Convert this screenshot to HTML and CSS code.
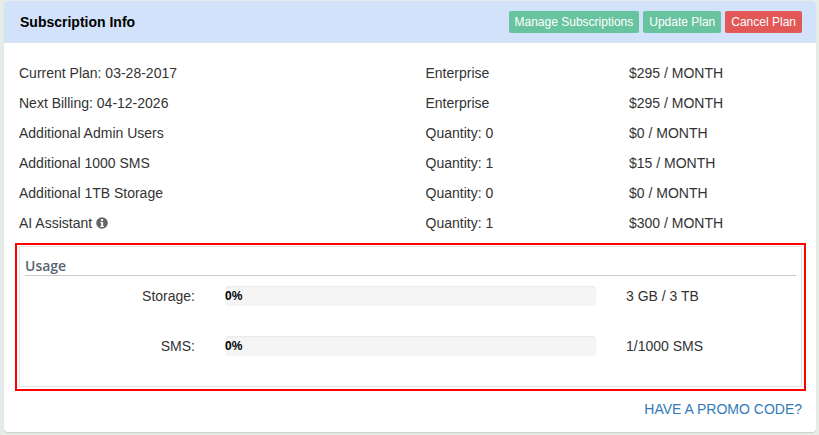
FILE: index.html
```html
<!DOCTYPE html>
<html lang="en">
<head>
<meta charset="utf-8">
<title>Subscription Info</title>
<link rel="stylesheet" href="styles.css">
</head>
<body>
<section class="panel">
  <header class="panel-head">
    <h2 class="panel-title">Subscription Info</h2>
    <div class="actions">
      <a class="btn btn-green">Manage Subscriptions</a>
      <a class="btn btn-green">Update Plan</a>
      <a class="btn btn-red">Cancel Plan</a>
    </div>
  </header>
  <div class="panel-body">
    <div class="plan-rows">
      <div class="plan-row"><span>Current Plan: 03-28-2017</span><span>Enterprise</span><span>$295 / MONTH</span></div>
      <div class="plan-row"><span>Next Billing: 04-12-2026</span><span>Enterprise</span><span>$295 / MONTH</span></div>
      <div class="plan-row"><span>Additional Admin Users</span><span>Quantity: 0</span><span>$0 / MONTH</span></div>
      <div class="plan-row"><span>Additional 1000 SMS</span><span>Quantity: 1</span><span>$15 / MONTH</span></div>
      <div class="plan-row"><span>Additional 1TB Storage</span><span>Quantity: 0</span><span>$0 / MONTH</span></div>
      <div class="plan-row"><span class="with-icon">AI Assistant
        <svg class="info-icon" viewBox="0 0 12 12" aria-hidden="true"><circle cx="6" cy="6" r="5.8" fill="#666"/><rect x="5" y="2.1" width="2.1" height="1.9" fill="#fff"/><path d="M4.4 5h2.7v3.9h.8v1H4.3v-1h.9V6h-.8z" fill="#fff"/></svg>
      </span><span>Quantity: 1</span><span>$300 / MONTH</span></div>
    </div>
    <div class="usage-highlight">
      <div class="usage-box">
        <h3 class="usage-title">Usage</h3>
        <div class="usage-row">
          <span class="usage-label">Storage:</span>
          <div class="progress"><span class="progress-text">0%</span></div>
          <span class="usage-value">3 GB / 3 TB</span>
        </div>
        <div class="usage-row">
          <span class="usage-label">SMS:</span>
          <div class="progress"><span class="progress-text">0%</span></div>
          <span class="usage-value">1/1000 SMS</span>
        </div>
      </div>
    </div>
    <div class="promo"><a class="promo-link">HAVE A PROMO CODE?</a></div>
  </div>
</section>
</body>
</html>
```
FILE: styles.css
```css
* { box-sizing: border-box; }
html, body { height: 100%; }
body {
  margin: 0;
  padding: 1px 3px 0 4px;
  background: #e6ece8;
  font-family: "Liberation Sans", Arial, sans-serif;
  font-size: 14px;
  line-height: 20px;
  color: #333;
  overflow: hidden;
}
.panel {
  width: 812px;
  height: 431px;
  background: #fff;
  border-radius: 4px;
  box-shadow: 0 1px 1px rgba(0, 0, 0, .12);
  overflow: hidden;
}
.panel-head {
  height: 42px;
  display: flex;
  align-items: center;
  justify-content: space-between;
  padding: 0 14px 0 16px;
  background: #d2e2fa;
  border-bottom: 1px solid #dfe3e8;
}
.panel-title { margin: 0; font-size: 14px; font-weight: 700; color: #000; }
.actions { display: flex; gap: 4px; }
.btn {
  height: 22px;
  padding: 0 6px;
  border-radius: 2px;
  font-size: 12px;
  line-height: 22px;
  color: #fff;
}
.btn-green { background: #68c39f; }
.btn-red { background: #e25856; }
.panel-body { padding: 15px 10px 0 11px; }
.plan-row {
  height: 30px;
  display: grid;
  grid-template-columns: 406.5px 203.5px 1fr;
  align-items: center;
  padding-left: 4px;
}
.with-icon { display: flex; align-items: center; gap: 4px; }
.info-icon { width: 12px; height: 12px; }
.usage-highlight {
  height: 148px;
  margin-top: 5px;
  padding: 1px 2px 2px;
  border: 2px solid #f00;
}
.usage-box { height: 141px; padding: 10px 5px 0; border: 1px solid #e3e3e3; }
.usage-title {
  margin: 0 0 10px;
  height: 19px;
  font-family: "Open Sans", "Liberation Sans", sans-serif;
  font-size: 14px;
  font-weight: 600;
  line-height: 17px;
  color: #5a6472;
  border-bottom: 1px solid #ccc;
}
.usage-row {
  display: grid;
  grid-template-columns: 170px 371px 1fr;
  column-gap: 30px;
  align-items: center;
  height: 20px;
  margin-bottom: 30px;
}
.usage-label { text-align: right; }
.progress {
  height: 20px;
  background: #f5f5f5;
  border-radius: 4px;
  box-shadow: inset 0 1px 2px rgba(0, 0, 0, .06);
}
.progress-text { display: block; font-size: 12px; font-weight: 700; color: #000; }
.promo { margin-top: 8px; padding-right: 4px; text-align: right; }
.promo-link { color: #337ab7; }
```
